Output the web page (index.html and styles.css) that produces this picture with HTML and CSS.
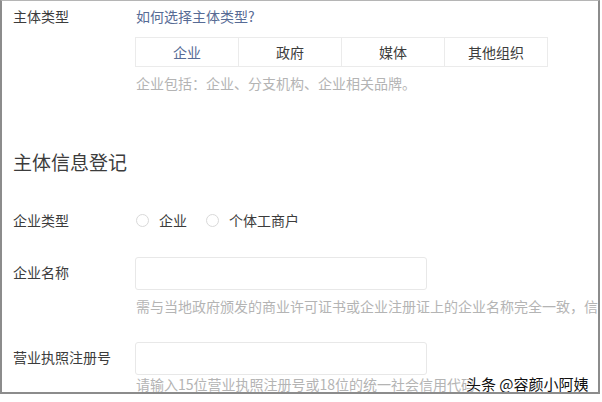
FILE: index.html
```html
<!DOCTYPE html>
<html lang="zh-CN">
<head>
  <meta charset="UTF-8">
  <title>主体信息登记</title>
  <link rel="stylesheet" href="styles.css">
</head>
<body>
  <div class="frame">
    <div class="row">
      <div class="label">主体类型</div>
      <div class="field">
        <a class="link" href="#">如何选择主体类型?</a>
        <ul class="tabs">
          <li class="active">企业</li>
          <li>政府</li>
          <li>媒体</li>
          <li>其他组织</li>
        </ul>
        <p class="hint">企业包括：企业、分支机构、企业相关品牌。</p>
      </div>
    </div>

    <h2 class="title">主体信息登记</h2>

    <div class="row radio-row">
      <div class="label">企业类型</div>
      <div class="field radios">
        <label class="radio"><span class="dot"></span>企业</label>
        <label class="radio"><span class="dot"></span>个体工商户</label>
      </div>
    </div>

    <div class="row input-row">
      <div class="label">企业名称</div>
      <div class="field">
        <div class="input"></div>
        <p class="hint">需与当地政府颁发的商业许可证书或企业注册证上的企业名称完全一致，信息</p>
      </div>
    </div>

    <div class="row input-row second">
      <div class="label">营业执照注册号</div>
      <div class="field">
        <div class="input"></div>
        <p class="hint">请输入15位营业执照注册号或18位的统一社会信用代码</p>
      </div>
    </div>

    <div class="mark">头条 @容颜小阿姨</div>
  </div>
</body>
</html>
```

FILE: styles.css
```css
body { margin: 0; background: #fff; font-family: "Noto Sans CJK SC", "Noto Sans", sans-serif; font-size: 14px; color: #3c3c3c; }
.frame { position: relative; box-sizing: border-box; width: 600px; height: 394px; border: 2px solid #8c8c8c; border-top: 1px solid #b5b5b5; padding: 5px 0 0 11px; overflow: hidden; }
.row { display: flex; }
.label { width: 122px; flex-shrink: 0; line-height: 20px; }
.field { display: flex; flex-direction: column; align-items: flex-start; min-width: 0; }
.link { color: #576b95; text-decoration: none; line-height: 20px; padding-left: 1px; }
.tabs { display: flex; list-style: none; margin: 11px 0 0; padding: 0; border: 1px solid #ebebeb; }
.tabs li { width: 102px; height: 28px; line-height: 28px; text-align: center; border-right: 1px solid #ebebeb; }
.tabs li:last-child { border-right: 0; }
.tabs li.active { color: #576b95; }
.hint { margin: 6px 0 0; padding-left: 1px; line-height: 20px; color: #b4b4b4; white-space: nowrap; }
.title { margin: 56px 0 0; font-size: 19px; font-weight: normal; line-height: 26px; color: #3c3c3c; }
.radio-row { margin-top: 35px; }
.radios { flex-direction: row; align-items: center; gap: 19px; padding-left: 1px; }
.radio { display: flex; align-items: center; gap: 10px; line-height: 20px; }
.dot { width: 11px; height: 11px; border: 1px solid #d9d9d9; border-radius: 50%; }
.input-row { margin-top: 27px; }
.input-row.second { margin-top: 26px; }
.input-row.second .hint { margin-top: 1px; line-height: 16px; }
.input-row .label { padding-top: 5px; }
.input { box-sizing: border-box; width: 292px; height: 33px; border: 1px solid #e8e8e8; border-radius: 3px; }
.mark { position: absolute; left: 464px; top: 373px; font-size: 15px; line-height: 20px; color: #111; text-shadow: 0 0 2px #fff; }
```
